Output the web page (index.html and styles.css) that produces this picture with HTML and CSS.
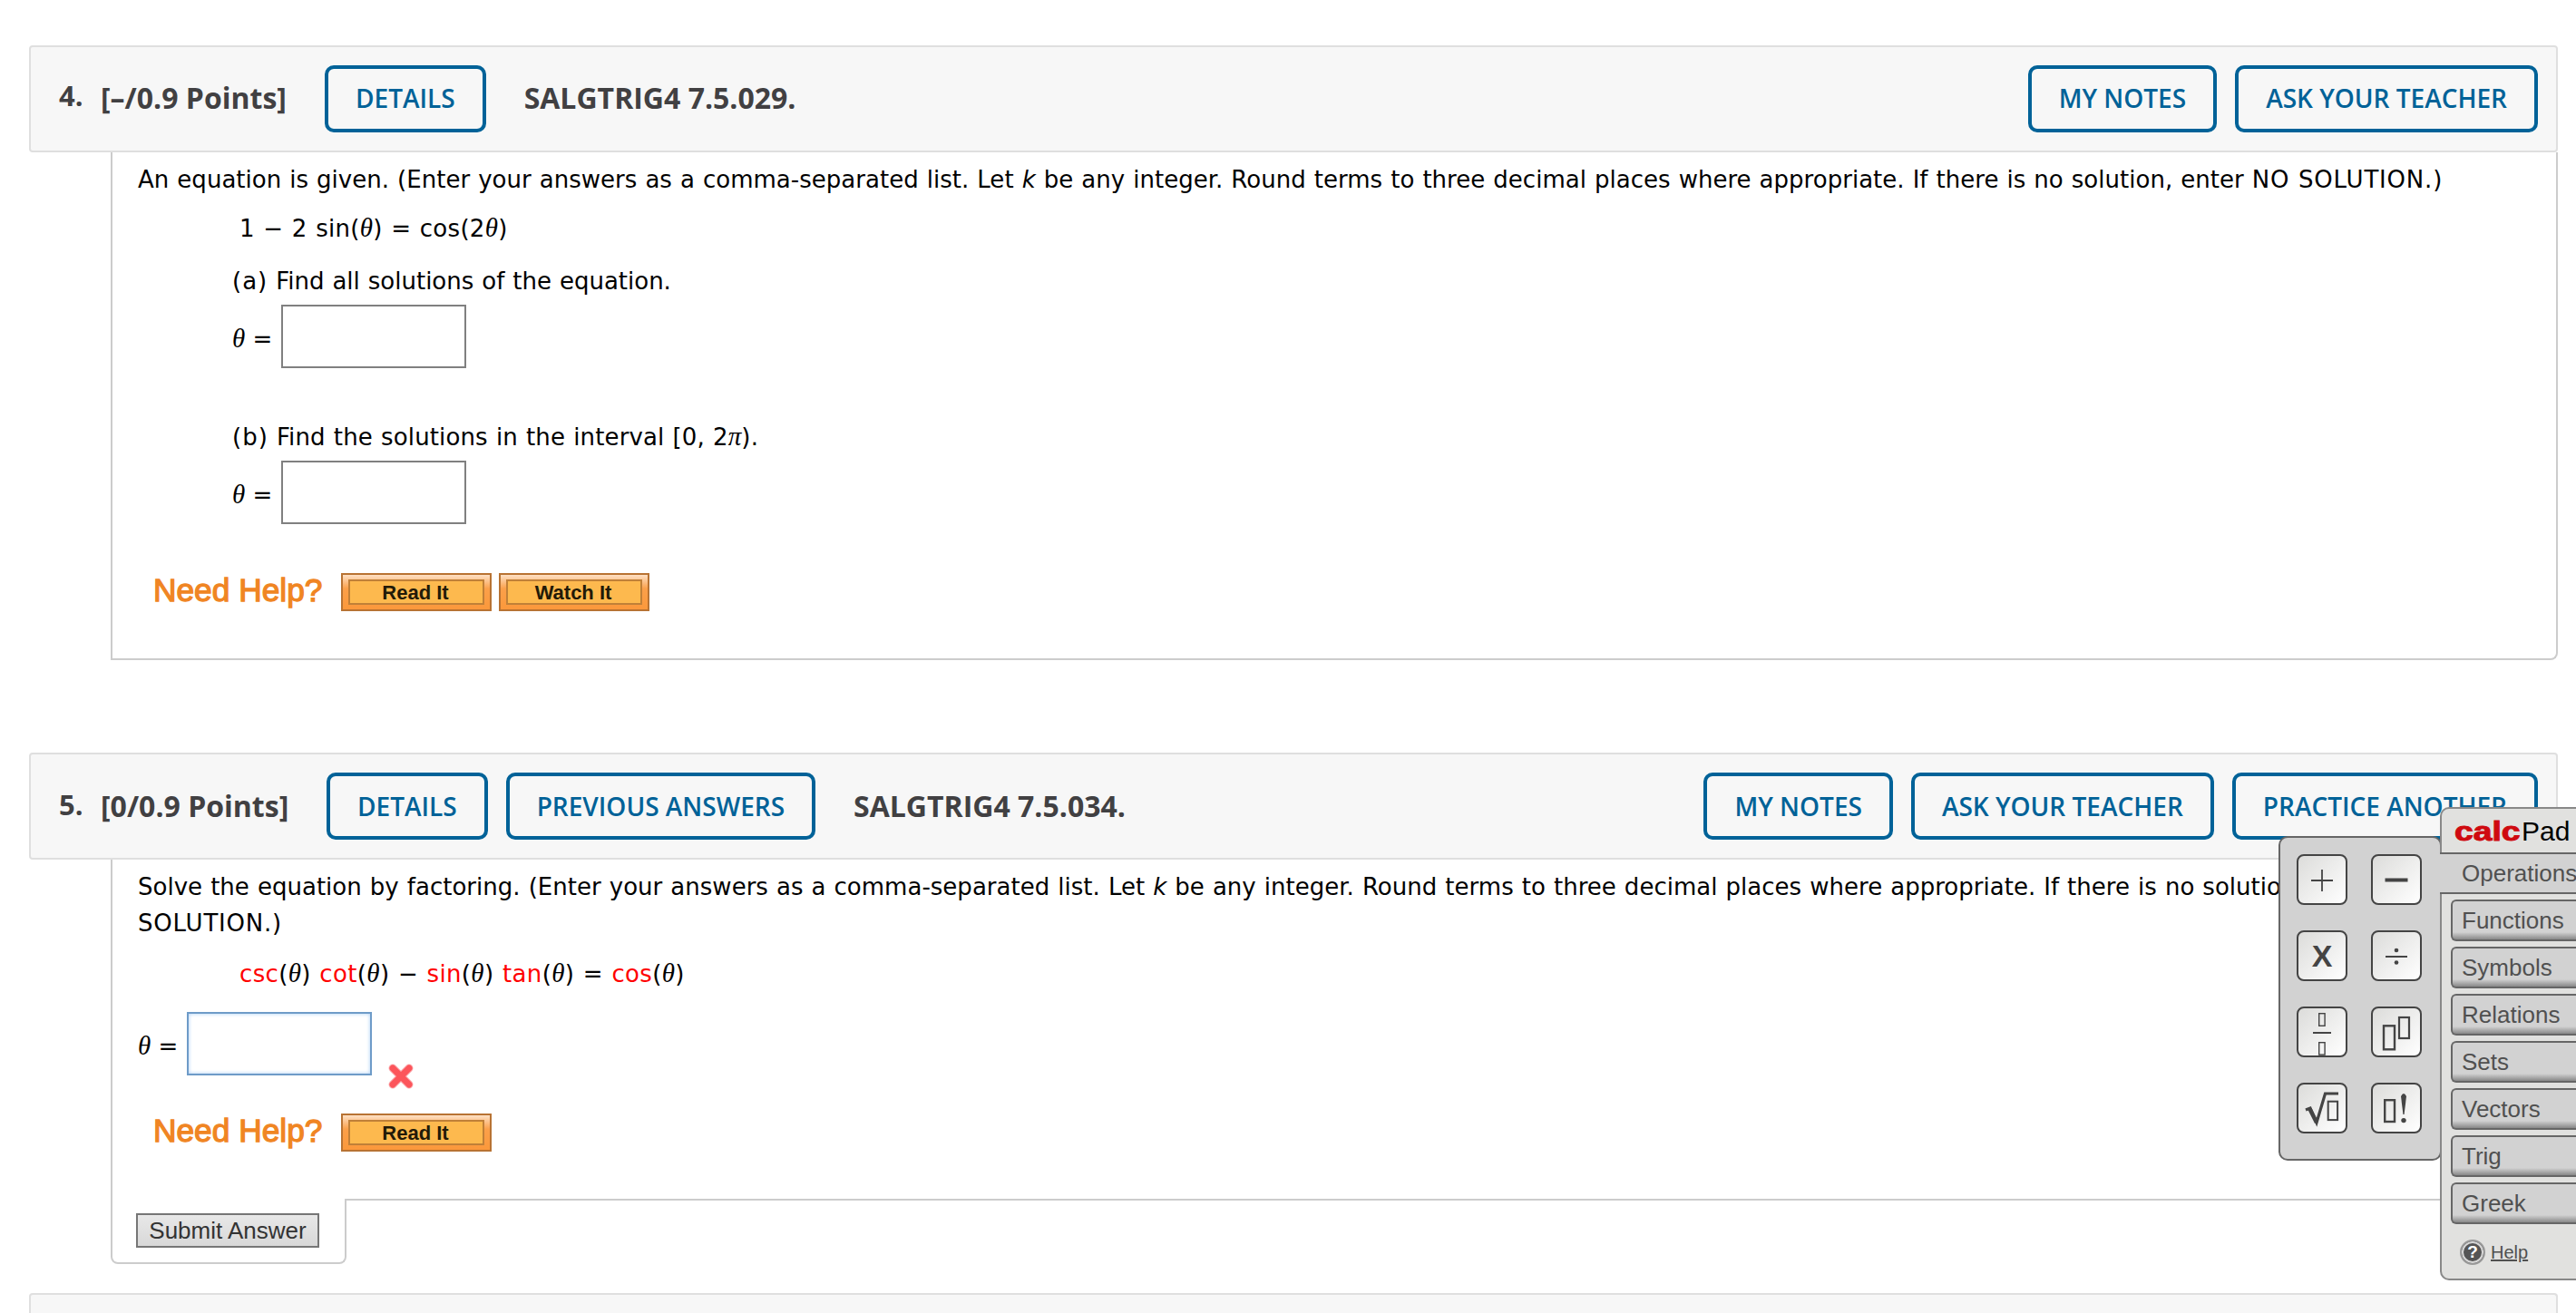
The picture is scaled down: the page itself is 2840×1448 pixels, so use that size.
FILE: index.html
```html
<!DOCTYPE html>
<html lang="en">
<head>
  <meta charset="UTF-8" />
  <meta name="viewport" content="width=device-width, initial-scale=1.0" />
  <title>Homework | Trigonometric Equations</title>
  <link rel="stylesheet" href="styles.css">
</head>
<body>
  <main class="assignment">
    <section class="question">
      <header class="question-header">
        <span class="number">4.</span>
        <span class="points">[–/0.9 Points]</span>
        <button class="btn">DETAILS</button>
        <span class="code">SALGTRIG4 7.5.029.</span>
        <div class="actions">
          <button class="btn">MY NOTES</button>
          <button class="btn">ASK YOUR TEACHER</button>
        </div>
      </header>
      <div class="question-body closed">
        <p class="prompt">An equation is given. (Enter your answers as a comma-separated list. Let <i>k</i> be any integer. Round terms to three decimal places where appropriate. If there is no solution, enter <span class="caps">NO SOLUTION.)</span></p>
        <p class="equation">1 − 2 sin(<i class="sym">θ</i>) = cos(2<i class="sym">θ</i>)</p>
        <div class="part">
          <p class="part-title"><span class="label">(a)</span> Find all solutions of the equation.</p>
          <div class="answer"><span class="answer-label"><i class="sym">θ</i> =</span><span class="answer-box"></span></div>
        </div>
        <div class="part part-b">
          <p class="part-title"><span class="label">(b)</span> Find the solutions in the interval [0, 2<i class="sym">π</i>).</p>
          <div class="answer"><span class="answer-label"><i class="sym">θ</i> =</span><span class="answer-box"></span></div>
        </div>
        <div class="help-row">
          <span class="need-help">Need Help?</span>
          <button class="help-btn"><span>Read It</span></button>
          <button class="help-btn"><span>Watch It</span></button>
        </div>
      </div>
    </section>

    <section class="question second">
      <header class="question-header low">
        <span class="number">5.</span>
        <span class="points">[0/0.9 Points]</span>
        <button class="btn">DETAILS</button>
        <button class="btn previous">PREVIOUS ANSWERS</button>
        <span class="code">SALGTRIG4 7.5.034.</span>
        <div class="actions">
          <button class="btn">MY NOTES</button>
          <button class="btn">ASK YOUR TEACHER</button>
          <button class="btn">PRACTICE ANOTHER</button>
        </div>
      </header>
      <div class="question-body open">
        <p class="prompt">Solve the equation by factoring. (Enter your answers as a comma-separated list. Let <i>k</i> be any integer. Round terms to three decimal places where appropriate. If there is no solution, enter NO<br><span class="caps">SOLUTION.)</span></p>
        <p class="equation"><span class="rand">csc</span>(<i class="sym">θ</i>) <span class="rand">cot</span>(<i class="sym">θ</i>) − <span class="rand">sin</span>(<i class="sym">θ</i>) <span class="rand">tan</span>(<i class="sym">θ</i>) = <span class="rand">cos</span>(<i class="sym">θ</i>)</p>
        <div class="answer">
          <span class="answer-label"><i class="sym">θ</i> =</span><span class="answer-box active"></span>
          <svg class="wrong" viewBox="0 0 28 28" width="28" height="28">
            <path d="M5 5 L23 23 M23 5 L5 23" stroke="#fbb0b3" stroke-width="9" stroke-linecap="round"/>
            <path d="M5 5 L23 23 M23 5 L5 23" stroke="#fc555b" stroke-width="7" stroke-linecap="round"/>
          </svg>
        </div>
        <div class="help-row">
          <span class="need-help">Need Help?</span>
          <button class="help-btn"><span>Read It</span></button>
        </div>
      </div>
      <div class="submit-row">
        <div class="submit-box"><button class="submit">Submit Answer</button></div>
        <div class="submit-rule"></div>
      </div>
    </section>

    <div class="question-header next"></div>
  </main>

  <aside class="calcpad">
    <div class="keys">
      <button class="key"><svg viewBox="0 0 52 52"><path d="M14 27H38M26 15V39" stroke="#444" stroke-width="1.8"/></svg></button>
      <button class="key"><svg viewBox="0 0 52 52"><path d="M13.5 26.5H38.5" stroke="#444" stroke-width="4"/></svg></button>
      <button class="key key-x">X</button>
      <button class="key"><svg viewBox="0 0 52 52"><path d="M14 27H38" stroke="#444" stroke-width="2"/><circle cx="26" cy="20" r="2.3" fill="#444"/><circle cx="26" cy="33.5" r="2.3" fill="#444"/></svg></button>
      <button class="key"><svg viewBox="0 0 52 52"><path d="M16 27H36" stroke="#444" stroke-width="2"/><rect x="22.7" y="5.7" width="6.4" height="13.6" fill="none" stroke="#444" stroke-width="1.4"/><rect x="22.7" y="37.7" width="6.4" height="13.4" fill="none" stroke="#444" stroke-width="1.4"/></svg></button>
      <button class="key"><svg viewBox="0 0 52 52"><rect x="12" y="19.3" width="12" height="26" fill="none" stroke="#444" stroke-width="2.4"/><rect x="29" y="10" width="11" height="23" fill="none" stroke="#444" stroke-width="2.2"/></svg></button>
      <button class="key"><svg viewBox="0 0 52 52"><path d="M8 28L13 26L20 42L29.5 10H44" fill="none" stroke="#444" stroke-width="3.2"/><path d="M12.5 27L20 42" stroke="#444" stroke-width="4.5"/><rect x="32.7" y="18.7" width="10.4" height="20.4" fill="none" stroke="#444" stroke-width="2"/></svg></button>
      <button class="key"><svg viewBox="0 0 52 52"><rect x="13.2" y="17.2" width="10.8" height="23.8" fill="none" stroke="#444" stroke-width="2.4"/><path d="M31 13Q34 7 37 13L34.6 33H33.4Z" fill="#444"/><circle cx="34" cy="39.6" r="2.7" fill="#444"/></svg></button>
    </div>
    <div class="pad">
      <div class="pad-title"><b>calc</b>Pad</div>
      <div class="tab-open">Operations</div>
      <nav class="tabs">
        <button class="tab">Functions</button>
        <button class="tab">Symbols</button>
        <button class="tab">Relations</button>
        <button class="tab">Sets</button>
        <button class="tab">Vectors</button>
        <button class="tab">Trig</button>
        <button class="tab">Greek</button>
      </nav>
      <div class="pad-help">
        <span class="help-icon">?</span>
        <a>Help</a>
      </div>
    </div>
  </aside>
</body>
</html>
```
FILE: styles.css
```css
* {
  box-sizing: border-box;
}
body {
  position: relative;
  height: 1448px;
  margin: 0;
  overflow: hidden;
  background: #fff;
  color: #000;
  font-family: "DejaVu Sans", Verdana, sans-serif;
  font-size: 26px;
}
p {
  margin: 0;
}
button {
  margin: 0;
  font-family: inherit;
}
.assignment {
  height: 1448px;
  padding: 50px 20px 0 32px;
  overflow: hidden;
}
.question {
  margin-bottom: 32px;
}
.second {
  margin-top: 102px;
}

/* Question header */
.question-header {
  display: flex;
  align-items: flex-start;
  height: 118px;
  padding: 20px 20px 0 31px;
  background: #f7f7f7;
  border: 2px solid #dfdfdf;
  border-radius: 4px;
  color: #414042;
  font-family: "Open Sans", sans-serif;
  font-size: 32px;
  font-weight: 700;
  white-space: nowrap;
}
.next {
  height: 22px;
  border-bottom: none;
  border-radius: 4px 4px 0 0;
}
.number {
  width: 46px;
  padding-top: 10px;
  font-size: 31px;
  line-height: 46px;
}
.points,
.code {
  padding-top: 14px;
  line-height: 44px;
}
.points {
  width: 247px;
}
.low .points {
  width: 249px;
}
.code {
  margin-left: 42px;
}
.btn {
  height: 74px;
  padding: 0 30px 2px;
  background: none;
  border: 4px solid #006298;
  border-radius: 10px;
  color: #006298;
  font-size: 28px;
  font-weight: 600;
  line-height: 64px;
}
.low .btn {
  padding: 1px 30px;
}
.low .points,
.low .code {
  padding-top: 15px;
}
.low .number {
  padding-top: 12px;
}
.previous {
  margin-left: 20px;
}
.actions {
  display: flex;
  gap: 20px;
  margin-left: auto;
}

/* Question body */
.question-body {
  margin-left: 90px;
  padding: 10px 0 0 28px;
  border: solid #ccc;
  border-width: 0 2px;
  white-space: nowrap;
}
.closed {
  height: 560px;
  border-bottom-width: 2px;
  border-bottom-right-radius: 8px;
}
.open {
  height: 374px;
}
.prompt {
  letter-spacing: 0.02px;
  line-height: 40px;
  word-spacing: 0.75px;
}
.caps {
  letter-spacing: 0.8px;
}
.equation {
  margin: 14px 0 0 112px;
  letter-spacing: 0.3px;
  line-height: 40px;
  word-spacing: 0.9px;
}
.open .equation {
  margin-top: 16px;
  letter-spacing: 0.35px;
}
.rand {
  color: #f00;
}
.sym {
  font-family: "Liberation Serif", serif;
  font-size: 29px;
  line-height: 1;
}
.part {
  margin: 18px 0 0 104px;
}
.part-title {
  line-height: 40px;
  word-spacing: 0.7px;
}
.label {
  letter-spacing: 1px;
}
.part-b {
  margin-top: 56px;
}
.part-b .part-title {
  letter-spacing: 0.14px;
}
.part-b .label {
  letter-spacing: 1px;
}
.answer {
  display: flex;
  margin-top: 6px;
}
.open .answer {
  margin-top: 22px;
}
.answer-label {
  width: 54px;
  padding-top: 18px;
  line-height: 40px;
}
.answer-box {
  width: 204px;
  height: 70px;
  border: 2px solid #808080;
}
.answer-box.active {
  border-color: #6e9bc8;
  box-shadow: inset 0 0 4px #a8cdf5;
}
.wrong {
  margin: 57px 0 0 18px;
}
.help-row {
  display: flex;
  align-items: center;
  margin: 54px 0 0 17px;
  font-family: "Liberation Sans", Arial, sans-serif;
}
.open .help-row {
  margin-top: 27px;
}
.need-help {
  width: 207px;
  color: #f08523;
  font-size: 35.3px;
  line-height: 38px;
  padding-bottom: 4px;
  -webkit-text-stroke: 1.3px #f08523;
}
.help-btn {
  width: 166px;
  height: 42px;
  margin-right: 8px;
  padding: 5px 6px;
  background: linear-gradient(#fee0c4, #fba04a 40%, #fb983b);
  border: 2px solid #b87333;
}
.help-btn span {
  display: block;
  height: 28px;
  padding-right: 2px;
  background: #fdb94e;
  border: 2px solid #c08038;
  color: #221a08;
  font-size: 22px;
  font-weight: 700;
  line-height: 26px;
}

/* Submit row */
.submit-row {
  display: flex;
  height: 72px;
  margin-left: 90px;
}
.submit-box {
  width: 260px;
  padding: 16px 0 0 26px;
  border: solid #ccc;
  border-width: 0 2px 2px;
  border-radius: 0 0 8px 8px;
}
.submit-rule {
  flex: 1;
  border-top: 2px solid #ccc;
}
.submit {
  display: block;
  width: 202px;
  height: 38px;
  padding: 0;
  background: linear-gradient(#e8e8e8, #d8d8d8);
  border: 2px solid #767676;
  color: #333;
  font-family: "Liberation Sans", Arial, sans-serif;
  font-size: 26px;
  line-height: 34px;
}

/* calcPad floats over the right edge */
.calcpad {
  position: absolute;
  top: 890px;
  left: 2512px;
  display: flex;
  width: 328px;
  color: #505050;
  font-family: "Liberation Sans", Arial, sans-serif;
  font-size: 26px;
}
.keys {
  display: grid;
  flex: none;
  grid-template-columns: 56px 56px;
  grid-auto-rows: 56px;
  gap: 28px 26px;
  width: 180px;
  height: 358px;
  margin-top: 32px;
  padding: 18px;
  background: #d2d2d2;
  border: 2px solid #666;
  border-radius: 10px;
}
.key {
  padding: 0;
  background: linear-gradient(135deg, #dcdcda, #fff);
  border: 2px solid #444;
  border-radius: 8px;
}
.key svg {
  display: block;
  width: 52px;
  height: 52px;
}
.key-x {
  color: #444;
  font-family: "Liberation Sans", Arial, sans-serif;
  font-size: 34px;
  font-weight: 700;
}
.pad {
  flex: 1;
  min-width: 0;
  height: 522px;
  margin-left: -2px;
  background: #e1e1df;
  border: 2px solid #888;
  border-right: none;
  border-radius: 10px 0 0 10px;
}
.pad-title {
  display: flex;
  height: 48px;
  padding-left: 14px;
  color: #000;
  font-size: 30px;
  line-height: 50px;
}
.pad-title b {
  width: 74px;
  color: #cf0a10;
  transform: scaleX(1.24);
  transform-origin: left;
  -webkit-text-stroke: 1px #cf0a10;
}
.tab-open {
  height: 46px;
  margin-left: -2px;
  padding-left: 24px;
  overflow: hidden;
  background: #d2d2d2;
  border: solid #666;
  border-width: 2px 0;
  line-height: 42px;
  white-space: nowrap;
}
.tabs {
  display: grid;
  gap: 6px;
  padding: 6px 0 0 10px;
}
.tab {
  height: 46px;
  padding: 0 0 0 10px;
  background: linear-gradient(#d2d2d2 34px, #888 42px);
  border: 2px solid #666;
  border-right: none;
  border-radius: 6px 0 0 6px;
  color: #505050;
  font-size: 26px;
  line-height: 40px;
  text-align: left;
}
.pad-help {
  display: flex;
  align-items: center;
  gap: 6px;
  margin: 17px 0 0 20px;
  font-size: 20px;
}
.pad-help a {
  text-decoration: underline;
}
.help-icon {
  width: 28px;
  height: 28px;
  background: #555;
  border: 2px solid #999;
  border-radius: 50%;
  box-shadow: inset 0 0 0 2px #d8d8d8;
  color: #fff;
  font-size: 19px;
  font-weight: 700;
  line-height: 24px;
  text-align: center;
}
```
